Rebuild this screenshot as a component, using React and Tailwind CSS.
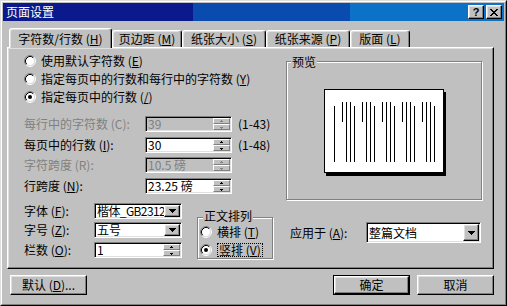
import React from "react";

// Win98 style bevels
const raised =
  "border border-t-white border-l-white border-r-black border-b-black shadow-[inset_-1px_-1px_0_#808080,inset_1px_1px_0_#dfdfdf]";
const sunken =
  "border border-t-[#808080] border-l-[#808080] border-r-white border-b-white shadow-[inset_1px_1px_0_#000,inset_-1px_-1px_0_#dfdfdf]";

const Key = ({ children }) => <span className="underline underline-offset-[1px]">{children}</span>;

function RadioDot({ checked }) {
  return (
    <svg width="12" height="12" viewBox="0 0 12 12" className="shrink-0">
      <circle cx="6" cy="6" r="4.5" fill="#fff" />
      <path d="M2.11 9.89A5.5 5.5 0 0 1 9.89 2.11" fill="none" stroke="#808080" />
      <path d="M9.89 2.11A5.5 5.5 0 0 1 2.11 9.89" fill="none" stroke="#fff" />
      <path d="M2.82 9.18A4.5 4.5 0 0 1 9.18 2.82" fill="none" stroke="#000" />
      <path d="M9.18 2.82A4.5 4.5 0 0 1 2.82 9.18" fill="none" stroke="#dfdfdf" />
      {checked && <circle cx="6" cy="6" r="2" fill="#000" />}
    </svg>
  );
}

function Radio({ checked, focus, children }) {
  return (
    <div className="h-[18px] flex items-center gap-[5px] whitespace-nowrap">
      <RadioDot checked={checked} />
      <span className={focus ? "border border-dotted border-black px-[1px]" : ""}>{children}</span>
    </div>
  );
}

function Arrow({ up, color = "#000" }) {
  return (
    <svg width="5" height="3" viewBox="0 0 5 3" shapeRendering="crispEdges">
      {up ? (
        <>
          <rect x="2" y="0" width="1" height="1" fill={color} />
          <rect x="1" y="1" width="3" height="1" fill={color} />
        </>
      ) : (
        <>
          <rect x="1" y="1" width="3" height="1" fill={color} />
          <rect x="2" y="2" width="1" height="1" fill={color} />
        </>
      )}
    </svg>
  );
}

function DownArrow() {
  return (
    <svg width="7" height="4" viewBox="0 0 7 4" shapeRendering="crispEdges">
      <rect x="0" y="0" width="7" height="1" fill="#000" />
      <rect x="1" y="1" width="5" height="1" fill="#000" />
      <rect x="2" y="2" width="3" height="1" fill="#000" />
      <rect x="3" y="3" width="1" height="1" fill="#000" />
    </svg>
  );
}

function Field({ className, value, disabled, type = "spin", tight }) {
  return (
    <div
      className={`flex ${sunken} ${className} ${disabled ? "bg-[#c0c0c0] text-[#808080]" : "bg-white text-black"}`}
    >
      <span
        className={`flex-1 min-w-0 pl-[2px] self-center whitespace-nowrap ${
          tight ? "tracking-[-0.6px]" : ""
        }`}
      >
        {value}
      </span>
      {type === "spin" ? (
        <div className="flex flex-col shrink-0 w-[17px] my-px mr-px">
          <div className="h-[6px] flex items-center justify-center bg-[#c0c0c0] border border-t-white border-l-white border-r-[#808080] border-b-[#808080]">
            <Arrow up color={disabled ? "#808080" : "#000"} />
          </div>
          <div className="h-[6px] flex items-center justify-center bg-[#c0c0c0] border border-t-white border-l-white border-r-[#808080] border-b-[#808080]">
            <Arrow color={disabled ? "#808080" : "#000"} />
          </div>
        </div>
      ) : (
        <div className={`w-[16px] shrink-0 my-px mr-px flex items-center justify-center bg-[#c0c0c0] ${raised}`}>
          <DownArrow />
        </div>
      )}
    </div>
  );
}

function SpinRow({ className, label, value, range, disabled }) {
  return (
    <div className={`h-[16px] flex items-center ${className}`}>
      <span className={`w-[121px] whitespace-nowrap ${disabled ? "text-[#808080]" : ""}`}>{label}</span>
      <Field className="w-[87px] h-[16px]" value={value} disabled={disabled} />
      <span className="ml-[6px]">{range}</span>
    </div>
  );
}

function Tab({ className, active, children }) {
  return (
    <div
      className={`${className} ${
        active ? "h-[20px] -mb-px z-10" : "h-[17px]"
      } relative bg-[#c0c0c0] border-t border-l border-r border-t-white border-l-white border-r-black rounded-t-[3px] shadow-[inset_-1px_0_0_#808080,inset_1px_1px_0_#dfdfdf] flex items-center justify-center whitespace-nowrap`}
    >
      {children}
    </div>
  );
}

function Group({ className, label, labelClass, children }) {
  return (
    <div className={`relative border border-[#808080] shadow-[inset_1px_1px_0_#fff,1px_1px_0_#fff] ${className}`}>
      <span className={`absolute bg-[#c0c0c0] px-[1px] whitespace-nowrap leading-[12px] ${labelClass}`}>{label}</span>
      {children}
    </div>
  );
}

function Button({ className, children, isDefault }) {
  if (isDefault) {
    return (
      <div className={`border border-black flex ${className}`}>
        <div className={`flex-1 flex items-center justify-center bg-[#c0c0c0] ${raised}`}>{children}</div>
      </div>
    );
  }
  return <div className={`flex items-center justify-center bg-[#c0c0c0] ${raised} ${className}`}>{children}</div>;
}

function PagePreview() {
  const lines = [{ x: 9, y1: 16, y2: 72 }];
  for (let g = 0; g < 5; g++) {
    const b = 17 + 20 * g;
    lines.push(
      { x: b, y1: 12, y2: 32 },
      { x: b + 4, y1: 12, y2: 72 },
      { x: b + 8, y1: 12, y2: 72 },
      { x: b + 12, y1: 16, y2: 72 }
    );
  }
  return (
    <div className="w-[120px] h-[84px] bg-white border border-black shadow-[2px_3px_0_#000]">
      <svg width="118" height="82" viewBox="0 0 118 82" shapeRendering="crispEdges">
        {lines.map((l, i) => (
          <rect key={i} x={l.x} y={l.y1} width="1" height={l.y2 - l.y1} fill="#000" />
        ))}
      </svg>
    </div>
  );
}

export default function App() {
  return (
    <div className="w-[507px] h-[306px] bg-[#c0c0c0] border border-t-[#dfdfdf] border-l-[#dfdfdf] border-r-black border-b-black font-['Noto_Sans_CJK_SC',sans-serif] text-[12px] leading-none text-black select-none">
      <div className="h-full border border-t-white border-l-white border-r-[#808080] border-b-[#808080] p-px flex flex-col">
        {/* 标题栏 */}
        <div className="h-[18px] shrink-0 flex items-center px-[2px] text-white bg-[linear-gradient(to_right,#0a1a8c_190px,#0a4bb0_190px,#0a4bb0_347px,#0c72c8_347px)]">
          <span className="flex-1 pl-px">页面设置</span>
          <div className={`w-[16px] h-[14px] flex items-center justify-center bg-[#c0c0c0] text-black font-['Liberation_Sans',sans-serif] font-bold text-[11px] ${raised}`}>
            ?
          </div>
          <div className={`w-[16px] h-[14px] ml-[2px] flex items-center justify-center bg-[#c0c0c0] ${raised}`}>
            <svg width="8" height="7" viewBox="0 0 8 7" shapeRendering="crispEdges">
              {[0, 1, 2, 3, 4, 5, 6].map((i) => (
                <g key={i}>
                  <rect x={i} y={i} width="2" height="1" fill="#000" />
                  <rect x={6 - i} y={i} width="2" height="1" fill="#000" />
                </g>
              ))}
            </svg>
          </div>
        </div>

        {/* 选项卡 */}
        <div className="mt-[7px] h-[19px] shrink-0 flex items-end pl-[6px] relative z-10">
          <Tab className="w-[103px]" active>
            字符数/行数 (<Key>H</Key>)
          </Tab>
          <Tab className="w-[70px]">
            页边距 (<Key>M</Key>)
          </Tab>
          <Tab className="w-[84px]">
            纸张大小 (<Key>S</Key>)
          </Tab>
          <Tab className="w-[84px]">
            纸张来源 (<Key>P</Key>)
          </Tab>
          <Tab className="w-[60px]">
            版面 (<Key>L</Key>)
          </Tab>
        </div>

        {/* 选项卡内容 */}
        <div className="ml-[4px] w-[487px] h-[222px] shrink-0 border border-t-white border-l-white border-r-black border-b-black shadow-[inset_-1px_-1px_0_#808080,inset_1px_1px_0_#dfdfdf] pt-[4px] pl-[16px] flex">
          <div className="w-[262px] flex flex-col">
            <Radio>
              使用默认字符数 (<Key>E</Key>)
            </Radio>
            <Radio>
              指定每页中的行数和每行中的字符数 (<Key>Y</Key>)
            </Radio>
            <Radio checked>
              指定每页中的行数 (<Key>/</Key>)
            </Radio>

            <SpinRow className="mt-[10px]" label="每行中的字符数 (C):" value="39" range="(1-43)" disabled />
            <SpinRow
              className="mt-[5px]"
              label={
                <>
                  每页中的行数 (<Key>I</Key>):
                </>
              }
              value="30"
              range="(1-48)"
            />
            <SpinRow className="mt-[4px]" label="字符跨度 (R):" value="10.5 磅" disabled />
            <SpinRow
              className="mt-[5px]"
              label={
                <>
                  行跨度 (<Key>N</Key>):
                </>
              }
              value="23.25 磅"
            />

            <div className="mt-[9px] flex">
              <div className="w-[158px] flex flex-col">
                <div className="h-[16px] flex items-center">
                  <span className="w-[70px]">
                    字体 (<Key>F</Key>):
                  </span>
                  <Field className="w-[88px] h-[16px]" value="楷体_GB2312" type="combo" tight />
                </div>
                <div className="mt-[3px] h-[16px] flex items-center">
                  <span className="w-[70px]">
                    字号 (<Key>Z</Key>):
                  </span>
                  <Field className="w-[88px] h-[16px]" value="五号" type="combo" />
                </div>
                <div className="mt-[4px] h-[16px] flex items-center">
                  <span className="w-[70px]">
                    栏数 (<Key>O</Key>):
                  </span>
                  <Field className="w-[88px] h-[16px]" value="1" />
                </div>
              </div>

              <Group
                className="ml-[15px] mt-[14px] w-[76px] h-[42px] pt-[5px] pl-[2px]"
                label="正文排列"
                labelClass="-top-[8px] left-[5px]"
              >
                <Radio>
                  横排 (<Key>T</Key>)
                </Radio>
                <Radio checked focus>
                  竖排 (<Key>V</Key>)
                </Radio>
              </Group>
            </div>
          </div>

          <div className="w-[196px] flex flex-col">
            <Group
              className="mt-[9px] h-[139px] flex items-center justify-center"
              label="预览"
              labelClass="-top-[6px] left-[4px]"
            >
              <PagePreview />
            </Group>
            <div className="mt-[22px] h-[21px] flex items-center">
              <span className="w-[80px] pl-[4px]">
                应用于 (<Key>A</Key>):
              </span>
              <Field className="w-[115px] h-[21px]" value="整篇文档" type="combo" />
            </div>
          </div>
        </div>

        {/* 底部按钮 */}
        <div className="mt-[6px] flex pl-[7px] pr-[10px]">
          <Button className="w-[77px] h-[20px]">
            默认 (<Key>D</Key>)...
          </Button>
          <Button className="w-[77px] h-[20px] ml-auto" isDefault>
            确定
          </Button>
          <Button className="w-[77px] h-[20px] ml-[7px]">取消</Button>
        </div>
      </div>
    </div>
  );
}
